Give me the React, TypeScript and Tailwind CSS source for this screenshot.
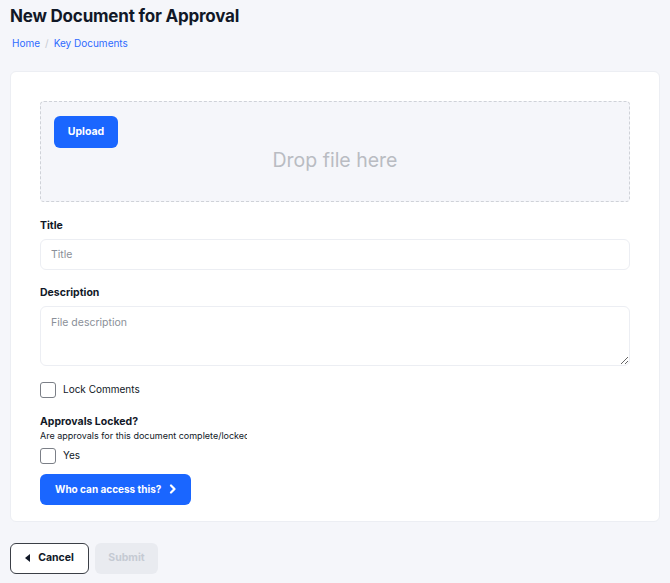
export default function App() {
  return (
    <div className="min-h-[583px] bg-[#f5f6fa] px-[10px] pt-[5px] pb-[10px] text-[#111827]" style={{ fontFamily: 'Inter, "Open Sans", sans-serif' }}>
      <h1 className="text-[17px] font-bold leading-[22px] tracking-[-0.2px]">New Document for Approval</h1>
      <nav className="mt-[9px] flex items-center gap-[5px] pl-[2px] text-[10px] text-[#2f6bff]">
        <span>Home</span>
        <span className="text-[#c7cad1]">/</span>
        <span>Key Documents</span>
      </nav>

      <div className="mt-[20px] rounded-md border border-[#eceef3] bg-white px-[29px] pt-[29px] pb-[16px]">
        <div className="relative h-[101px] rounded-sm border border-dashed border-[#cfd2d8] bg-[#f5f6fa]">
          <button className="absolute left-[13px] top-[14px] h-[32px] w-[64px] rounded-md bg-[#1a66ff] text-[10.5px] font-bold text-white">
            Upload
          </button>
          <div className="flex h-full items-center justify-center pt-[18px] text-[19.5px] text-[#b9bcc2]">Drop file here</div>
        </div>

        <label className="mt-[16px] block text-[10.5px] font-bold">Title</label>
        <input
          placeholder="Title"
          className="mt-[5px] block h-[31px] w-full rounded-md border border-[#eceef3] px-[10px] text-[10.5px] placeholder:text-[#8a8f98] outline-none"
        />

        <label className="mt-[15px] block text-[10.5px] font-bold">Description</label>
        <textarea
          placeholder="File description"
          className="mt-[5px] block h-[60px] w-full rounded-md border border-[#eceef3] px-[10px] py-[8px] text-[10.5px] placeholder:text-[#8a8f98] outline-none"
        />

        <div className="mt-[16px] flex items-center gap-[7px]">
          <span className="block h-[16px] w-[16px] rounded-[3px] border border-[#7b7f87] bg-white" />
          <span className="text-[10px]">Lock Comments</span>
        </div>

        <div className="mt-[17px] text-[10.5px] font-bold leading-[14px]">Approvals Locked?</div>
        <div className="mt-[1px] w-[207px] overflow-hidden whitespace-nowrap text-[9px] leading-[12px]">
          Are approvals for this document complete/locked?
        </div>

        <div className="mt-[6px] flex items-center gap-[7px]">
          <span className="block h-[16px] w-[16px] rounded-[3px] border border-[#7b7f87] bg-white" />
          <span className="text-[10px]">Yes</span>
        </div>

        <button className="mt-[10px] flex h-[31px] items-center gap-[8px] rounded-md bg-[#1a66ff] pl-[15px] pr-[14px] text-[10px] font-bold text-white">
          Who can access this?
          <svg width="8" height="10" viewBox="0 0 8 10" fill="none">
            <path d="M2 1.5 L5.5 5 L2 8.5" stroke="white" strokeWidth="2.2" strokeLinecap="round" strokeLinejoin="round" />
          </svg>
        </button>
      </div>

      <div className="mt-[21px] flex gap-[6px]">
        <button className="flex h-[31px] w-[79px] items-center justify-center gap-[8px] rounded-md border border-[#3b3f46] bg-white text-[10.5px] font-bold">
          <svg width="5" height="8" viewBox="0 0 5 8">
            <path d="M5 0 L0 4 L5 8 Z" fill="#111827" />
          </svg>
          Cancel
        </button>
        <button className="h-[31px] w-[63px] rounded-md bg-[#e9ebf0] text-[10.5px] font-bold text-[#c5cad3]">Submit</button>
      </div>
    </div>
  );
}
